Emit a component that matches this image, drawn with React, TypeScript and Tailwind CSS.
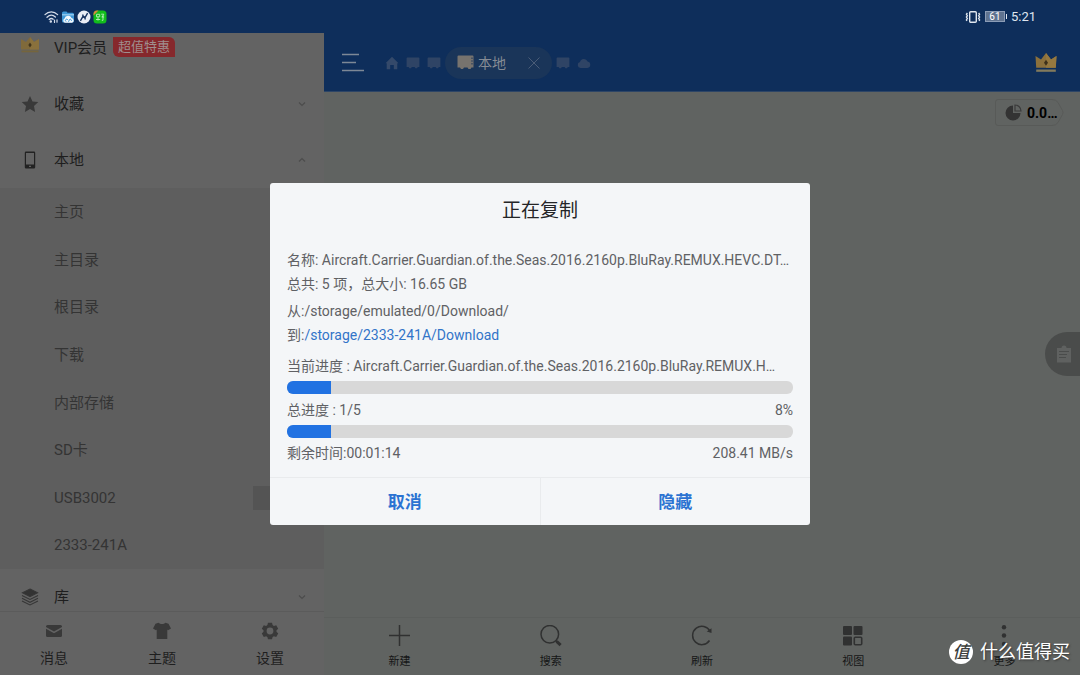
// App.tsx
import type { ReactNode } from 'react';

const storageItems = ['主页', '主目录', '根目录', '下载', '内部存储', 'SD卡', 'USB3002', '2333-241A'];

const WifiIcon = () => (
  <svg width="15" height="14" viewBox="0 0 15 14" fill="none" stroke="#d3dbe8" strokeWidth="1.300" strokeLinecap="round">
    <path d="M1 4.600C4.600 1 10 1 13.600 4.600" />
    <path d="M3 7.200C5.600 4.800 9 4.800 11.400 7" />
    <path d="M5.200 9.400C6.500 8.300 8 8.300 9.200 9.200" />
    <circle cx="6.800" cy="11.600" r="0.600" fill="#d3dbe8" />
    <path d="M10.500 10.200v2.200M13 9.800v2.400" strokeWidth="1.200" />
  </svg>
);

const CloudFolderIcon = () => (
  <svg width="14" height="14" viewBox="0 0 13 14">
    <path d="M0.500 3a1.500 1.500 0 0 1 1.500-1.500h3L6 2.700h5A1.500 1.500 0 0 1 12.500 4.200V11A1.500 1.500 0 0 1 11 12.500H2A1.500 1.500 0 0 1 .5 11z" fill="#3f98d6" />
    <path d="M.5 4h12v1.500H.5z" fill="#8cc4ea" />
    <path d="M3.600 12.800a2.200 2.200 0 0 1-.5-4.200 3.600 3.600 0 0 1 6.900-.6 2.500 2.500 0 0 1 .6 4.800z" fill="#f3f8fc" />
    <path d="M4.600 11.600a1.300 1.300 0 1 1 1.700-1.900M7 11.800l1-2.300a1.200 1.200 0 0 1 1.800 1.500" fill="none" stroke="#3f98d6" strokeWidth="1" />
  </svg>
);

const CompassIcon = () => (
  <svg width="14" height="14" viewBox="0 0 14 14">
    <circle cx="7" cy="7" r="6.500" fill="#e9edf4" />
    <path d="M10.600 3.200L8.200 7.400 6 6.200l-.2-1.700M3.400 10.800L5.800 6.600 8 7.800l.2 1.700" fill="none" stroke="#14305c" strokeWidth="1.400" />
  </svg>
);

const GreenAppIcon = () => (
  <svg width="14" height="14" viewBox="0 0 14 14">
    <rect x="0.500" y="0.500" width="13" height="13" rx="3.500" fill="#12bd1c" />
    <path d="M.5 4A3.500 3.500 0 0 1 4 .5h1.500L.5 5.500z" fill="#d6883c" />
    <path d="M3.500 4.300h3.200v2.500H3.500zM3 9.500h4.200M5 7v3.500M8.200 4.200h2.600L9.200 7M8.500 7h2.600M10 5.500v4.800H8.800" fill="none" stroke="#b9efbb" strokeWidth="0.900" />
  </svg>
);

const VibrateIcon = () => (
  <svg width="16" height="14" viewBox="0 0 16 14" fill="none" stroke="#dfe6ef" strokeWidth="1.400">
    <rect x="4.700" y="1.700" width="6.600" height="10.600" rx="1" />
    <path d="M2.400 3l-1 1.300 1 1.400-1 1.400 1 1.400-1 1.400.6.9M13.600 3l1 1.300-1 1.400 1 1.400-1 1.400 1 1.400-.6.9" strokeWidth="1.300" />
  </svg>
);

const SidebarCrownIcon = () => (
  <svg width="20" height="18" viewBox="0 0 20 18">
    <path d="M1 3l5 3 4-5 4 5 5-3v10.500H1z" fill="#806a3b" />
    <path d="M10 1l4 5 5-3v10.500h-9z" fill="#8a713c" />
    <path d="M10 6.500l1.700 2.500-1.700 2.500L8.300 9z" fill="#41351d" />
    <path d="M1.500 14.500h17v1.800h-17z" fill="#75653d" />
  </svg>
);

const CrownIcon = () => (
  <svg width="22" height="21" viewBox="0 0 22 21">
    <path d="M.5 4l5.500 3.500 5-6.500 5 6.500L21.500 4l-.7 11.800H1.200z" fill="#8b703c" />
    <path d="M11 1l5 6.500L21.500 4l-.7 11.800H11z" fill="#957840" />
    <path d="M11 7.800l2 3-2 3-2-3z" fill="#3d301a" />
    <path d="M1.200 17.500h19.600v2.300H1.200z" fill="#827a5c" />
  </svg>
);

const StarIcon = () => (
  <svg width="18" height="18" viewBox="0 0 18 18">
    <path d="M9 1l2.500 5.400 5.800.7-4.300 4 1.100 5.800L9 14l-5.100 2.900L5 11.100l-4.300-4 5.800-.7z" fill="#393939" />
  </svg>
);

const PhoneIcon = () => (
  <svg width="18" height="18" viewBox="0 0 18 18">
    <path fillRule="evenodd" d="M5 .5h8a1.200 1.200 0 0 1 1.200 1.200v14.600A1.200 1.200 0 0 1 13 17.500H5a1.200 1.200 0 0 1-1.200-1.200V1.700A1.200 1.200 0 0 1 5 .5zM5 2v11.500h8V2zM8 14.800v1.200h2v-1.200z" fill="#222" />
  </svg>
);

const LayersIcon = () => (
  <svg width="18" height="18" viewBox="0 0 18 18" fill="none" stroke="#363636" strokeWidth="1.100">
    <path d="M9 1l7.500 3.800L9 8.600 1.500 4.800z" fill="#333" />
    <path d="M1 7.500l8 4 8-4M1 10.300l8 4 8-4M1 13l8 4 8-4" />
  </svg>
);

const Chevron = ({ up = false }: { up?: boolean }) => (
  <svg width="8" height="6" viewBox="0 0 8 6" fill="none" stroke="#4c4c4c" strokeWidth="1.200">
    <path d={up ? 'M1 4.500l3-3 3 3' : 'M1 1.500l3 3 3-3'} />
  </svg>
);

const CardIcon = ({ active = false }: { active?: boolean }) => (
  <svg width={active ? 17 : 14} height={active ? 15 : 12} viewBox="0 0 17 15">
    <path d="M1.500.5h14a1 1 0 0 1 1 1v11H14.500L13.500 14h-2L10.500 12.500H7L6 14H4l-1-1.500H.5v-11a1 1 0 0 1 1-1z" fill={active ? '#77736e' : '#2f4465'} />
    {active && <path d="M15 2.500v8" stroke="#2c405f" strokeWidth="1.200" strokeDasharray="1.500 1.200" />}
  </svg>
);

const HomeIcon = () => (
  <svg width="14" height="14" viewBox="0 0 14 14">
    <path d="M7 .8L13.500 7.200H12.300V13.200H8.800V9H5.200v4.200H1.700v-6H.5z" fill="#34496a" />
  </svg>
);

const CloudIcon = () => (
  <svg width="14" height="12" viewBox="0 0 14 12">
    <path d="M3.500 11a3 3 0 0 1-.5-5.900 4 4 0 0 1 7.600-.6A3.300 3.300 0 0 1 10.500 11z" fill="#2f4465" />
  </svg>
);

const MailIcon = () => (
  <svg width="18" height="18" viewBox="0 0 18 18" fill="#393939">
    <path d="M2.500 3h13a1.500 1.500 0 0 1 1.500 1.500v.6L9 9.600 1 5.100v-.6A1.500 1.500 0 0 1 2.500 3z" />
    <path d="M1 6.800l8 4.500 8-4.500v6.700a1.500 1.500 0 0 1-1.500 1.500h-13A1.500 1.500 0 0 1 1 13.500z" />
  </svg>
);

const ShirtIcon = () => (
  <svg width="20" height="18" viewBox="0 0 20 18">
    <path d="M6.500.8c1.800 1.700 5.200 1.700 7 0l3 1L19 6.500l-3 1.800-.7-.8V17H4.700V7.500l-.7.8-3-1.800L3.500 1.800z" fill="#393939" />
  </svg>
);

const GearIcon = () => (
  <svg width="18" height="18" viewBox="0 0 18 18">
    <path fillRule="evenodd" d="M7 .8h4l.6 2.300 1.300.8 2.300-.7 2 3.500-1.700 1.600v1.500l1.700 1.600-2 3.500-2.300-.7-1.300.8L11 17.200H7L6.400 15l-1.300-.8-2.300.7-2-3.500 1.700-1.600V8.300L.8 6.700l2-3.500 2.300.7 1.300-.8zM9 5.600a3.400 3.400 0 1 0 0 6.800 3.400 3.400 0 0 0 0-6.800z" fill="#393939" />
  </svg>
);

const PlusIcon = () => (
  <svg width="22" height="22" viewBox="0 0 22 22" stroke="#303131" strokeWidth="1.500">
    <path d="M10.500 0v21M0 10.500h21" />
  </svg>
);

const SearchIcon = () => (
  <svg width="22" height="22" viewBox="0 0 22 22" fill="none" stroke="#303131">
    <circle cx="9.800" cy="9.300" r="8.800" strokeWidth="1.500" />
    <path d="M15.800 15.600l1.600 1.600" strokeWidth="1.600" />
    <path d="M16.600 16.400l4 3.800" strokeWidth="3" />
  </svg>
);

const RefreshIcon = () => (
  <svg width="22" height="22" viewBox="0 0 22 22" fill="none" stroke="#303131" strokeWidth="1.500">
    <path d="M19 6.200A9.200 9.200 0 1 0 18.500 15.500" />
    <path d="M20.500 3.300V8L15.800 6.600z" fill="#303131" stroke="none" />
  </svg>
);

const GridIcon = () => (
  <svg width="22" height="22" viewBox="0 0 22 22" fill="#303131">
    <rect x="1" y="1" width="9" height="9" rx="1" />
    <rect x="11.500" y="1" width="9" height="9" rx="1" />
    <rect x="1" y="11.500" width="9" height="9" rx="1" />
    <rect x="12.300" y="12.300" width="7.400" height="7.400" rx="1" fill="none" stroke="#303131" strokeWidth="1.600" />
  </svg>
);

const MoreIcon = () => (
  <svg width="22" height="22" viewBox="0 0 22 22" fill="#303131">
    <circle cx="11" cy="2.200" r="2.200" />
    <circle cx="11" cy="10.500" r="2.200" />
    <circle cx="11" cy="19" r="2.200" />
  </svg>
);

interface ToolItem {
  label: string;
  icon: ReactNode;
}

const sidebarTools: ToolItem[] = [
  { label: '消息', icon: <MailIcon /> },
  { label: '主题', icon: <ShirtIcon /> },
  { label: '设置', icon: <GearIcon /> },
];

const mainTools: ToolItem[] = [
  { label: '新建', icon: <PlusIcon /> },
  { label: '搜索', icon: <SearchIcon /> },
  { label: '刷新', icon: <RefreshIcon /> },
  { label: '视图', icon: <GridIcon /> },
  { label: '更多', icon: <MoreIcon /> },
];

const StatusBar = () => (
  <header className="h-[33px] shrink-0 bg-[#0e2e5b] flex items-center justify-between px-11">
    <div className="flex items-center gap-[2px]">
      <WifiIcon />
      <CloudFolderIcon />
      <CompassIcon />
      <GreenAppIcon />
    </div>
    <div className="flex items-center gap-1 text-[#dfe6ef]">
      <VibrateIcon />
      <div className="flex items-center gap-px">
        <span className="w-5 h-[11px] border border-[#8b9cb6] bg-[#5f7390] text-[10px] leading-[9px] text-center text-white">61</span>
        <span className="w-px h-[5px] bg-[#dfe6ef]" />
      </div>
      <span className="text-[13px]">5:21</span>
    </div>
  </header>
);

interface SectionRowProps {
  icon: ReactNode;
  label: string;
  open?: boolean;
}

const SectionRow = ({ icon, label, open }: SectionRowProps) => (
  <button className="w-full h-14 shrink-0 flex items-center pl-[21px] pr-[18px] text-left">
    <span className="w-[33px] flex">{icon}</span>
    <span className="flex-1">{label}</span>
    <Chevron up={open} />
  </button>
);

const Sidebar = () => (
  <aside className="w-[30%] shrink-0 flex flex-col bg-[#636363] text-[15px] text-[#1e1e1e]">
    <button className="h-[43px] shrink-0 flex items-start pl-5 pt-[3px] text-left">
      <span className="w-[34px] flex"><SidebarCrownIcon /></span>
      <span className="leading-6">VIP会员</span>
      <span className="ml-[6px] mt-px h-5 px-[5px] rounded-tr-md rounded-bl-md bg-[#86282c] text-[#a08e8e] text-[13px] leading-5">超值特惠</span>
    </button>
    <SectionRow icon={<StarIcon />} label="收藏" />
    <SectionRow icon={<PhoneIcon />} label="本地" open />
    <ul className="flex-1 grid auto-rows-fr bg-[#5e5e5e] text-[#343434]">
      {storageItems.map((item) => (
        <li key={item} className="flex">
          <button className="flex-1 flex items-center justify-between pt-px pl-[54px] pr-[47px] text-left">
            {item}
            {item === 'USB3002' && <span className="w-6 h-6 bg-[#545454]" />}
          </button>
        </li>
      ))}
    </ul>
    <div className="h-[42px] shrink-0 overflow-hidden">
      <SectionRow icon={<LayersIcon />} label="库" />
    </div>
    <nav className="h-16 shrink-0 border-t border-[#5b5b5b] grid grid-cols-3">
      {sidebarTools.map((tool) => (
        <button key={tool.label} className="flex flex-col items-center pt-[10px] gap-2 text-sm leading-5">
          {tool.icon}
          {tool.label}
        </button>
      ))}
    </nav>
  </aside>
);

const TopBar = () => (
  <div className="h-[59px] shrink-0 border-b border-[#2d4566] bg-[#0e2e5b] flex items-center pt-px pl-[18px] pr-[23px]">
    <button aria-label="菜单">
      <svg width="22" height="20" viewBox="0 0 22 20" stroke="#7d8896" strokeWidth="1.500">
        <path d="M0 1.500h17M0 9.500h14M0 17.500h22" />
      </svg>
    </button>
    <div className="flex-1 flex items-center gap-[7px] ml-[21px]">
      <HomeIcon />
      <CardIcon />
      <CardIcon />
      <div className="-mx-[3px] h-8 w-[107px] rounded-full bg-[#1a3559] flex items-center px-3 text-sm text-[#858b94]">
        <CardIcon active />
        <span className="flex-1 pl-1">本地</span>
        <button aria-label="关闭">
          <svg width="12" height="12" viewBox="0 0 12 12" stroke="#4a5c77" strokeWidth="1">
            <path d="M.5.500l11 11M11.500.5l-11 11" />
          </svg>
        </button>
      </div>
      <CardIcon />
      <CloudIcon />
    </div>
    <button aria-label="VIP"><CrownIcon /></button>
  </div>
);

const MainPanel = () => (
  <main className="flex-1 min-w-0 flex flex-col bg-[#606361]">
    <TopBar />
    <div className="flex-1 relative flex justify-end items-start pt-[7px] pr-[15px]">
      <button className="relative h-[27px] w-[70px] flex items-center pl-[10px] gap-[5px] text-sm font-bold text-black">
        <svg className="absolute inset-0" width="70" height="27" viewBox="0 0 70 27" fill="none" stroke="#585a58">
          <path d="M3 .5h54q4 0 6 3l4.500 8q1 2 0 4l-4.500 8q-2 3-6 3H3q-2.500 0-2.500-2.500V3Q.5.500 3 .5z" />
        </svg>
        <svg width="17" height="17" viewBox="0 0 17 17" fill="#333">
          <path d="M8 1.500V9h7.500A7.500 7.500 0 1 1 8 1.500z" />
          <path d="M10 1v6h6a6 6 0 0 0-6-6z" fill="none" stroke="#3b3b3b" strokeWidth="1.200" />
        </svg>
        0.0…
      </button>
      <button aria-label="剪贴板" className="absolute right-0 top-60 w-[35px] h-11 rounded-l-full bg-[#4a4c4b] flex items-center pl-[11px]">
        <svg width="16" height="18" viewBox="0 0 16 18">
          <path d="M1 3h4.500a2.500 2.500 0 0 1 5 0H15v14.500H1z" fill="#5f6160" />
          <path d="M3 6.500h10M3 9.500h8M3 12.500h7" stroke="#4a4c4b" strokeWidth="1.200" />
        </svg>
      </button>
    </div>
    <nav className="h-[58px] shrink-0 border-t border-[#5b5e5c] grid grid-cols-5">
      {mainTools.map((tool) => (
        <button key={tool.label} className="flex flex-col items-center pt-[7px] gap-[7px] text-[11px] leading-4 text-[#151616]">
          {tool.icon}
          {tool.label}
        </button>
      ))}
    </nav>
  </main>
);

const Progress = ({ label, value }: { label: string; value: number }) => (
  <div role="progressbar" aria-label={label} aria-valuenow={value} className="h-[13px] rounded-md bg-[#d8d8d8] overflow-hidden">
    <div className="h-full bg-[#2172e2]" style={{ width: `${value}%` }} />
  </div>
);

const CopyDialog = () => (
  <section role="dialog" aria-label="正在复制" className="w-1/2 rounded-[3px] bg-[#f4f6f8] flex flex-col text-sm text-[#606164]">
    <h1 className="pt-[14px] text-center text-[19px] leading-7 text-[#242527]">正在复制</h1>
    <div className="px-[17px] pt-[23px] pb-3 leading-6 whitespace-nowrap">
      <p>名称: Aircraft.Carrier.Guardian.of.the.Seas.2016.2160p.BluRay.REMUX.HEVC.DT…</p>
      <p>总共: 5 项，总大小: 16.65 GB</p>
      <p className="mt-[3px]">从:/storage/emulated/0/Download/</p>
      <p>到:<a href="#download" className="text-[#3274c8]">/storage/2333-241A/Download</a></p>
      <p className="mt-[7px] mb-[3px]">当前进度 : Aircraft.Carrier.Guardian.of.the.Seas.2016.2160p.BluRay.REMUX.H…</p>
      <Progress label="当前进度" value={8.6} />
      <p className="flex justify-between mt-1 mb-[3px]"><span>总进度 : 1/5</span><span>8%</span></p>
      <Progress label="总进度" value={8.6} />
      <p className="flex justify-between mt-[3px]"><span>剩余时间:00:01:14</span><span>208.41 MB/s</span></p>
    </div>
    <div className="h-12 border-t border-[#e9ebed] flex text-[17px] font-bold text-[#2b73d2]">
      <button className="flex-1 pt-[2px] border-r border-[#e9ebed]">取消</button>
      <button className="flex-1 pt-[2px]">隐藏</button>
    </div>
  </section>
);

const Watermark = () => (
  <div className="absolute right-[10px] bottom-[11px] flex items-center gap-[7px] text-white text-lg leading-6">
    <span className="size-6 rounded-full bg-white text-[#3c3e3d] text-[17px] leading-6 text-center font-medium italic">值</span>
    <span className="[text-shadow:1px_1px_2px_#333]">什么值得买</span>
  </div>
);

const App = () => {
  return (
    <div className="relative h-screen flex flex-col overflow-hidden font-[Roboto,'Noto_Sans_CJK_SC',sans-serif]">
      <StatusBar />
      <div className="relative flex-1 min-h-0 flex">
        <Sidebar />
        <MainPanel />
        <div className="absolute inset-0 flex items-center justify-center">
          <CopyDialog />
        </div>
      </div>
      <Watermark />
    </div>
  );
};

export default App;
